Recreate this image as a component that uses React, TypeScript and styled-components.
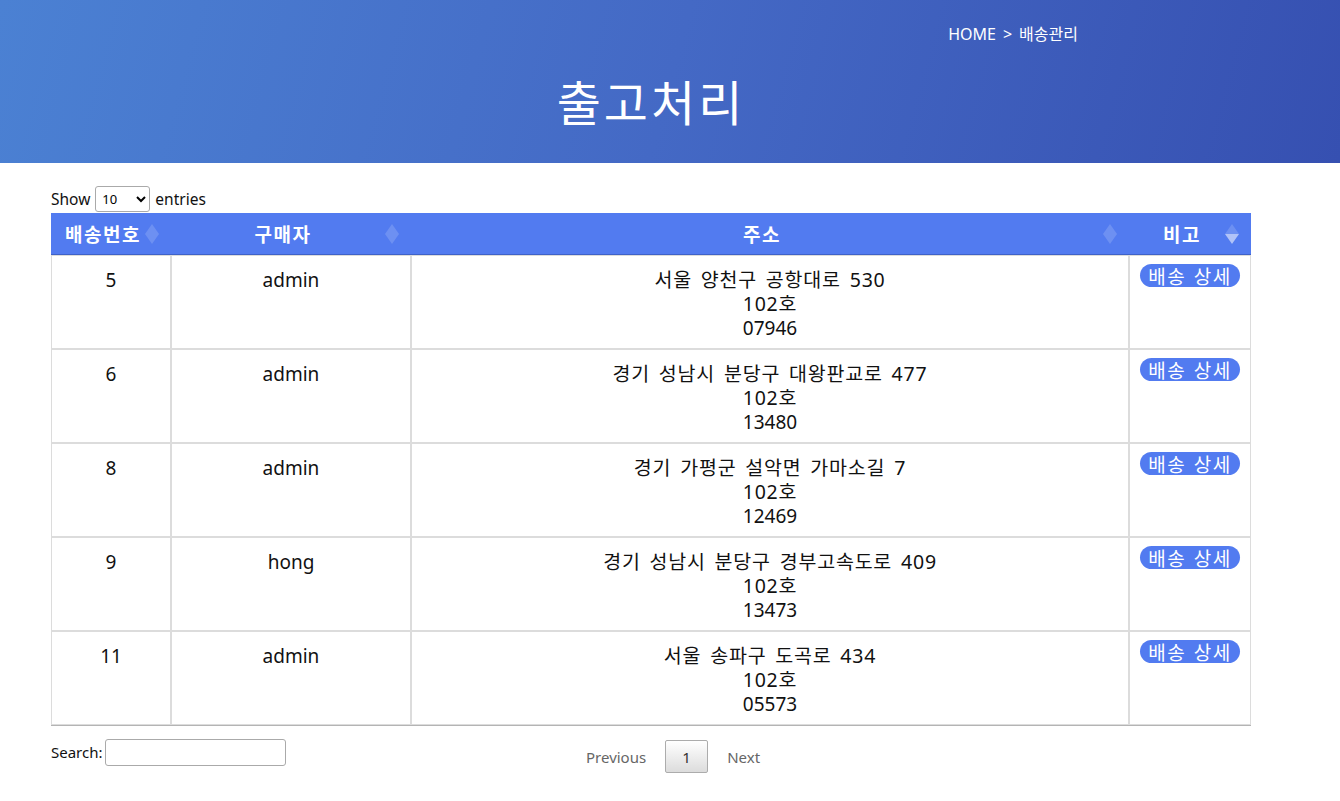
import React from "react";
import styled, { createGlobalStyle } from "styled-components";

const GlobalStyle = createGlobalStyle`
  html, body { margin: 0; padding: 0; background: #fff; }
  body { font-family: "Noto Sans", "Noto Sans CJK KR", sans-serif; color: #111; }
  * { box-sizing: border-box; }
`;

const FONT = `"Noto Sans", "Noto Sans CJK KR", sans-serif`;

const Hero = styled.header`
  height: 163px;
  background: linear-gradient(105deg, #4b81d3 0%, #4469c5 50%, #3650b1 100%);
  color: #fff;
`;

const HeroInner = styled.div`
  width: 1200px;
  margin-left: 51px;
  display: flex;
  flex-direction: column;
`;

const Breadcrumb = styled.div`
  align-self: flex-end;
  margin: 23px 173px 0 0;
  font-family: ${FONT};
  font-size: 16px;
  line-height: 22px;
  display: flex;
  gap: 7px;
`;

const Title = styled.h1`
  margin: 23px 0 0;
  text-align: center;
  font-family: "Noto Sans CJK KR", sans-serif;
  font-weight: 400;
  font-size: 48px;
  line-height: 64px;
  letter-spacing: 3px;
`;

const Main = styled.main`
  width: 1200px;
  margin-left: 51px;
  padding-top: 22px;
`;

const LengthRow = styled.div`
  display: flex;
  align-items: center;
  gap: 5px;
  font-family: ${FONT};
  font-size: 15.5px;
  height: 28px;
`;

const Select = styled.select`
  width: 55px;
  height: 26px;
  font-size: 13px;
  font-family: ${FONT};
  border: 1px solid #aaa;
  border-radius: 3px;
  background: #fff;
  padding: 0 2px;
`;

const Table = styled.table`
  width: 1200px;
  table-layout: fixed;
  border-collapse: separate;
  border-spacing: 0;
  border-bottom: 1px solid #b4b4b4;
  font-family: ${FONT};
`;

const Th = styled.th`
  position: relative;
  background: #527bf0;
  color: #fff;
  font-size: 19px;
  font-weight: 700;
  letter-spacing: 1.5px;
  height: 42px;
  padding: 0 16px 0 0;
  text-align: center;
  border-bottom: 1px solid #3f62c8;
  font-family: "Noto Sans CJK KR", sans-serif;
`;

const SortIcon = styled.span<{ $right: number; $desc?: boolean }>`
  position: absolute;
  right: ${(p) => p.$right}px;
  top: 11px;
  width: 14px;
  height: 22px;
  display: flex;
  flex-direction: column;
  align-items: center;
  &::before,
  &::after {
    content: "";
    width: 0;
    height: 0;
    border-left: 7px solid transparent;
    border-right: 7px solid transparent;
  }
  &::before {
    border-bottom: 10px solid rgba(255, 255, 255, 0.16);
  }
  &::after {
    border-top: 10px solid rgba(255, 255, 255, ${(p) => (p.$desc ? 0.55 : 0.16)});
  }
`;

const Td = styled.td`
  border: 1px solid #dcdcdc;
  padding: 12px 8px 8px;
  vertical-align: top;
  text-align: center;
  font-size: 19px;
  line-height: 24px;
  color: #111;
  height: 94px;
`;

const Line = styled.div<{ $korean?: boolean }>`
  white-space: nowrap;
  height: 24px;
  line-height: 24px;
  font-size: ${(p) => (p.$korean ? "19.5px" : "19px")};
  letter-spacing: ${(p) => (p.$korean ? "0.8px" : "0")};
  word-spacing: ${(p) => (p.$korean ? "3px" : "0")};
`;

const DetailButton = styled.button`
  display: block;
  margin: -4px auto 0;
  background: #527bf0;
  color: #fff;
  border: none;
  border-radius: 12px;
  height: 23px;
  width: 100px;
  padding: 0;
  font-family: "Noto Sans CJK KR", sans-serif;
  font-size: 19px;
  letter-spacing: 1.5px;
  word-spacing: 2px;
  line-height: 23px;
  cursor: pointer;
`;

const Footer = styled.div`
  display: grid;
  grid-template-columns: 535px auto 1fr;
  align-items: center;
  margin-top: 14px;
  font-family: ${FONT};
`;

const SearchLabel = styled.label`
  display: flex;
  align-items: center;
  gap: 2px;
  font-size: 15px;
  margin-top: -9px;
`;

const SearchInput = styled.input`
  width: 181px;
  height: 27px;
  border: 1px solid #aaa;
  border-radius: 3px;
  padding: 0 4px;
`;

const Paging = styled.div`
  display: flex;
  align-items: center;
  gap: 19px;
  font-size: 15px;
  color: #666;
`;

const PageButton = styled.span`
  width: 43px;
  height: 33px;
  display: flex;
  align-items: center;
  justify-content: center;
  border: 1px solid #acacac;
  border-radius: 2px;
  background: linear-gradient(#fff, #dcdcdc);
  color: #333;
`;

const rows = [
  { id: 5, buyer: "admin", addr: "서울 양천구 공항대로 530", detail: "102호", zip: "07946" },
  { id: 6, buyer: "admin", addr: "경기 성남시 분당구 대왕판교로 477", detail: "102호", zip: "13480" },
  { id: 8, buyer: "admin", addr: "경기 가평군 설악면 가마소길 7", detail: "102호", zip: "12469" },
  { id: 9, buyer: "hong", addr: "경기 성남시 분당구 경부고속도로 409", detail: "102호", zip: "13473" },
  { id: 11, buyer: "admin", addr: "서울 송파구 도곡로 434", detail: "102호", zip: "05573" },
];

export default function App() {
  return (
    <>
      <GlobalStyle />
      <Hero>
        <HeroInner>
          <Breadcrumb>
            <span>HOME</span>
            <span>&gt;</span>
            <span>배송관리</span>
          </Breadcrumb>
          <Title>출고처리</Title>
        </HeroInner>
      </Hero>
      <Main>
        <LengthRow>
          <span>Show</span>
          <Select defaultValue="10">
            <option value="10">10</option>
            <option value="25">25</option>
            <option value="50">50</option>
            <option value="100">100</option>
          </Select>
          <span>entries</span>
        </LengthRow>
        <Table>
          <colgroup>
            <col style={{ width: 120 }} />
            <col style={{ width: 240 }} />
            <col style={{ width: 718 }} />
            <col style={{ width: 122 }} />
          </colgroup>
          <thead>
            <tr>
              <Th>
                배송번호
                <SortIcon $right={12} />
              </Th>
              <Th>
                구매자
                <SortIcon $right={12} />
              </Th>
              <Th>
                주소
                <SortIcon $right={12} />
              </Th>
              <Th>
                비고
                <SortIcon $right={12} $desc />
              </Th>
            </tr>
          </thead>
          <tbody>
            {rows.map((r) => (
              <tr key={r.id}>
                <Td>{r.id}</Td>
                <Td>{r.buyer}</Td>
                <Td>
                  <Line $korean>{r.addr}</Line>
                  <Line $korean>{r.detail}</Line>
                  <Line>{r.zip}</Line>
                </Td>
                <Td>
                  <DetailButton>배송 상세</DetailButton>
                </Td>
              </tr>
            ))}
          </tbody>
        </Table>
        <Footer>
          <SearchLabel>
            Search:
            <SearchInput type="search" />
          </SearchLabel>
          <Paging>
            <span>Previous</span>
            <PageButton>1</PageButton>
            <span>Next</span>
          </Paging>
        </Footer>
      </Main>
    </>
  );
}
